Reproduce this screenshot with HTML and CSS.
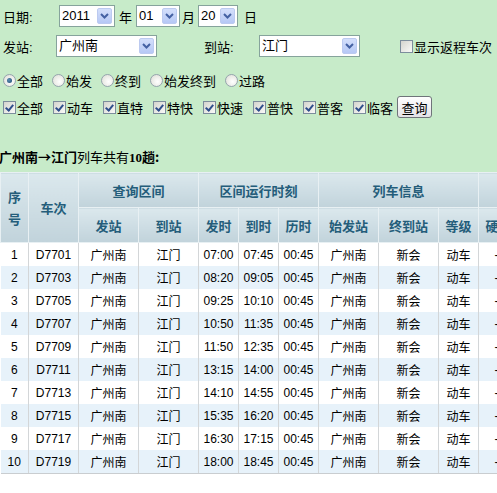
FILE: index.html
```html
<!DOCTYPE html>
<html lang="zh-CN">
<head>
    <meta charset="UTF-8">
    <title>列车时刻查询</title>
    <link rel="stylesheet" href="styles.css">
</head>
<body>

    <div class="query">
        <!-- 日期 -->
        <div class="form-row row-date">
            <span class="label lbl-date">日期:</span>
            <div class="sel w-year"><span class="val">2011</span><span class="arrow"><svg width="9" height="6" viewBox="0 0 9 6"><path d="M1 1 L4.5 4.5 L8 1" fill="none" stroke="#4461a3" stroke-width="2"/></svg></span></div>
            <span class="unit u-year">年</span>
            <div class="sel w-month"><span class="val">01</span><span class="arrow"><svg width="9" height="6" viewBox="0 0 9 6"><path d="M1 1 L4.5 4.5 L8 1" fill="none" stroke="#4461a3" stroke-width="2"/></svg></span></div>
            <span class="unit u-month">月</span>
            <div class="sel w-day"><span class="val">20</span><span class="arrow"><svg width="9" height="6" viewBox="0 0 9 6"><path d="M1 1 L4.5 4.5 L8 1" fill="none" stroke="#4461a3" stroke-width="2"/></svg></span></div>
            <span class="unit u-day">日</span>
        </div>

        <!-- 车站 -->
        <div class="form-row row-station">
            <span class="label lbl-from">发站:</span>
            <div class="sel w-station"><span class="val">广州南</span><span class="arrow"><svg width="9" height="6" viewBox="0 0 9 6"><path d="M1 1 L4.5 4.5 L8 1" fill="none" stroke="#4461a3" stroke-width="2"/></svg></span></div>
            <span class="label lbl-to">到站:</span>
            <div class="sel w-station"><span class="val">江门</span><span class="arrow"><svg width="9" height="6" viewBox="0 0 9 6"><path d="M1 1 L4.5 4.5 L8 1" fill="none" stroke="#4461a3" stroke-width="2"/></svg></span></div>
            <label class="back"><input type="checkbox" class="chk chk-plain">显示返程车次</label>
        </div>

        <!-- 发到类型 -->
        <div class="form-row row-type">
            <label class="opt"><input type="radio" name="type" class="rad" checked>全部</label>
            <label class="opt"><input type="radio" name="type" class="rad">始发</label>
            <label class="opt"><input type="radio" name="type" class="rad">终到</label>
            <label class="opt"><input type="radio" name="type" class="rad">始发终到</label>
            <label class="opt"><input type="radio" name="type" class="rad">过路</label>
        </div>

        <!-- 车种 -->
        <div class="form-row row-train">
            <label class="opt"><input type="checkbox" class="chk" checked>全部</label>
            <label class="opt"><input type="checkbox" class="chk" checked>动车</label>
            <label class="opt"><input type="checkbox" class="chk" checked>直特</label>
            <label class="opt"><input type="checkbox" class="chk" checked>特快</label>
            <label class="opt"><input type="checkbox" class="chk" checked>快速</label>
            <label class="opt"><input type="checkbox" class="chk" checked>普快</label>
            <label class="opt"><input type="checkbox" class="chk" checked>普客</label>
            <label class="opt last"><input type="checkbox" class="chk" checked>临客</label>
            <button class="btn">查询</button>
        </div>

        <div class="summary"><b>广州南→江门</b>列车共有<b class="num">10</b><b>趟:</b></div>
    </div>

    <div class="result">
        <table class="trains">
            <colgroup>
                <col style="width:28px"><col style="width:50px">
                <col style="width:60px"><col style="width:60px">
                <col style="width:40px"><col style="width:40px"><col style="width:40px">
                <col style="width:60px"><col style="width:60px"><col style="width:40px">
                <col style="width:40px"><col style="width:40px"><col style="width:40px"><col style="width:40px">
            </colgroup>
            <thead>
                <tr>
                    <th rowspan="2" class="narrow">序号</th>
                    <th rowspan="2">车次</th>
                    <th colspan="2">查询区间</th>
                    <th colspan="3">区间运行时刻</th>
                    <th colspan="3">列车信息</th>
                    <th colspan="4">余票信息</th>
                </tr>
                <tr>
                    <th>发站</th><th>到站</th>
                    <th>发时</th><th>到时</th><th>历时</th>
                    <th>始发站</th><th>终到站</th><th>等级</th>
                    <th>硬座</th><th>硬卧</th><th>软座</th><th>软卧</th>
                </tr>
            </thead>
            <tbody>
                <tr><td>1</td><td>D7701</td><td>广州南</td><td>江门</td><td>07:00</td><td>07:45</td><td>00:45</td><td>广州南</td><td>新会</td><td>动车</td><td>--</td><td>--</td><td>--</td><td>--</td></tr>
                <tr><td>2</td><td>D7703</td><td>广州南</td><td>江门</td><td>08:20</td><td>09:05</td><td>00:45</td><td>广州南</td><td>新会</td><td>动车</td><td>--</td><td>--</td><td>--</td><td>--</td></tr>
                <tr><td>3</td><td>D7705</td><td>广州南</td><td>江门</td><td>09:25</td><td>10:10</td><td>00:45</td><td>广州南</td><td>新会</td><td>动车</td><td>--</td><td>--</td><td>--</td><td>--</td></tr>
                <tr><td>4</td><td>D7707</td><td>广州南</td><td>江门</td><td>10:50</td><td>11:35</td><td>00:45</td><td>广州南</td><td>新会</td><td>动车</td><td>--</td><td>--</td><td>--</td><td>--</td></tr>
                <tr><td>5</td><td>D7709</td><td>广州南</td><td>江门</td><td>11:50</td><td>12:35</td><td>00:45</td><td>广州南</td><td>新会</td><td>动车</td><td>--</td><td>--</td><td>--</td><td>--</td></tr>
                <tr><td>6</td><td>D7711</td><td>广州南</td><td>江门</td><td>13:15</td><td>14:00</td><td>00:45</td><td>广州南</td><td>新会</td><td>动车</td><td>--</td><td>--</td><td>--</td><td>--</td></tr>
                <tr><td>7</td><td>D7713</td><td>广州南</td><td>江门</td><td>14:10</td><td>14:55</td><td>00:45</td><td>广州南</td><td>新会</td><td>动车</td><td>--</td><td>--</td><td>--</td><td>--</td></tr>
                <tr><td>8</td><td>D7715</td><td>广州南</td><td>江门</td><td>15:35</td><td>16:20</td><td>00:45</td><td>广州南</td><td>新会</td><td>动车</td><td>--</td><td>--</td><td>--</td><td>--</td></tr>
                <tr><td>9</td><td>D7717</td><td>广州南</td><td>江门</td><td>16:30</td><td>17:15</td><td>00:45</td><td>广州南</td><td>新会</td><td>动车</td><td>--</td><td>--</td><td>--</td><td>--</td></tr>
                <tr><td>10</td><td>D7719</td><td>广州南</td><td>江门</td><td>18:00</td><td>18:45</td><td>00:45</td><td>广州南</td><td>新会</td><td>动车</td><td>--</td><td>--</td><td>--</td><td>--</td></tr>
            </tbody>
        </table>
    </div>

</body>
</html>
```

FILE: styles.css
```css
body {
    margin: 0;
    background-color: #fff;
    font-family: "Liberation Sans", "Noto Sans CJK SC", sans-serif;
    font-size: 13px;
    color: #000;
    overflow: hidden;
}

.query {
    background-color: #c7ebc9;
    height: 172px;
    box-sizing: border-box;
    padding: 5px 0 0 3px;
}

.form-row {
    display: flex;
    align-items: center;
    height: 22px;
    white-space: nowrap;
}

.row-station { margin-top: 8px; }
.row-type { margin-top: 11px; height: 24px; }
.row-train { margin-top: 4px; }

.label { display: inline-block; }
.lbl-date { width: 56px; }
.lbl-from { width: 53px; }
.lbl-to { margin-left: 47px; width: 55px; }

.unit.u-year { margin: 0 4px; }
.unit.u-month { margin: 0 3px 0 2px; }
.unit.u-day { margin-left: 6px; }

/* select boxes */
.sel {
    display: flex;
    align-items: center;
    justify-content: space-between;
    height: 22px;
    box-sizing: border-box;
    border: 1px solid #86a39c;
    background-color: #fff;
    padding: 0 2px 0 2px;
}

.sel .val { line-height: 20px; }

.sel .arrow {
    display: flex;
    align-items: center;
    justify-content: center;
    width: 15px;
    height: 16px;
    box-sizing: border-box;
    border: 1px solid #bccaf0;
    border-radius: 2px;
    background: linear-gradient(#d4dffb, #b6c8f5);
}

.w-year { width: 56px; }
.w-month { width: 44px; }
.w-day { width: 40px; }
.w-station { width: 101px; }

.back {
    display: flex;
    align-items: center;
    margin-left: 40px;
}

/* checkbox & radio */
.opt {
    display: flex;
    align-items: center;
    margin-right: 9px;
}

.row-train .opt { margin-right: 10px; }
.row-train .opt.last { margin-right: 0; }

.chk, .rad {
    appearance: none;
    -webkit-appearance: none;
    width: 13px;
    height: 13px;
    margin: 0 1px 0 0;
    box-sizing: border-box;
    position: relative;
    flex: none;
}

.chk {
    border: 1px solid #7c8d9c;
    background: linear-gradient(135deg, #d4d4ce, #fafaf8);
}

.chk:checked::after {
    content: "";
    position: absolute;
    left: 3px;
    top: 1px;
    width: 3px;
    height: 6px;
    border: solid #2f4f8c;
    border-width: 0 2px 2px 0;
    transform: rotate(40deg);
}

.rad {
    border: 1px solid #95a4ad;
    border-radius: 50%;
    background: radial-gradient(circle at 60% 60%, #fff, #dcdcd4);
}

.rad:checked::after {
    content: "";
    position: absolute;
    left: 3px;
    top: 3px;
    width: 5px;
    height: 5px;
    border-radius: 50%;
    background: radial-gradient(circle at 40% 40%, #5c8fb6, #1c4a6e);
}

.btn {
    margin-left: 4px;
    width: 35px;
    height: 22px;
    padding: 0;
    border: 1px solid #6f747a;
    border-radius: 3px;
    background: linear-gradient(#ffffff, #e3e2e6);
    font-family: "Noto Sans CJK SC", sans-serif;
    font-size: 13px;
    color: #000;
}

.summary {
    margin-top: 27px;
    margin-left: -4px;
    height: 23px;
    line-height: 23px;
    font-family: "Noto Sans CJK SC", sans-serif;
}

.summary .num { font-family: "Liberation Serif", serif; }

/* result table */
.result {
    width: 497px;
    overflow: hidden;
}

.trains {
    border-collapse: collapse;
    table-layout: fixed;
    width: 638px;
    font-size: 12px;
}

.trains th {
    height: 34px;
    padding: 0;
    border: 1px solid #e8f0f3;
    background: linear-gradient(#dbe8ed, #c1d3db);
    color: #245d7a;
    font-family: "Noto Sans CJK SC", sans-serif;
    font-size: 13px;
    font-weight: bold;
    text-align: center;
    white-space: nowrap;
}

.trains th.narrow { padding: 0 6px; line-height: 22px; white-space: normal; }

.trains td {
    height: 23px;
    padding: 0;
    border-left: 1px solid #d3d6d8;
    border-right: 1px solid #d3d6d8;
    text-align: center;
    white-space: nowrap;
}

.trains tbody tr:nth-child(even) td { background-color: #e7f2fa; }
.trains tbody tr:last-child td { border-bottom: 1px solid #c9cdd0; }
.trains tbody td:first-child { border-left: none; }
```
